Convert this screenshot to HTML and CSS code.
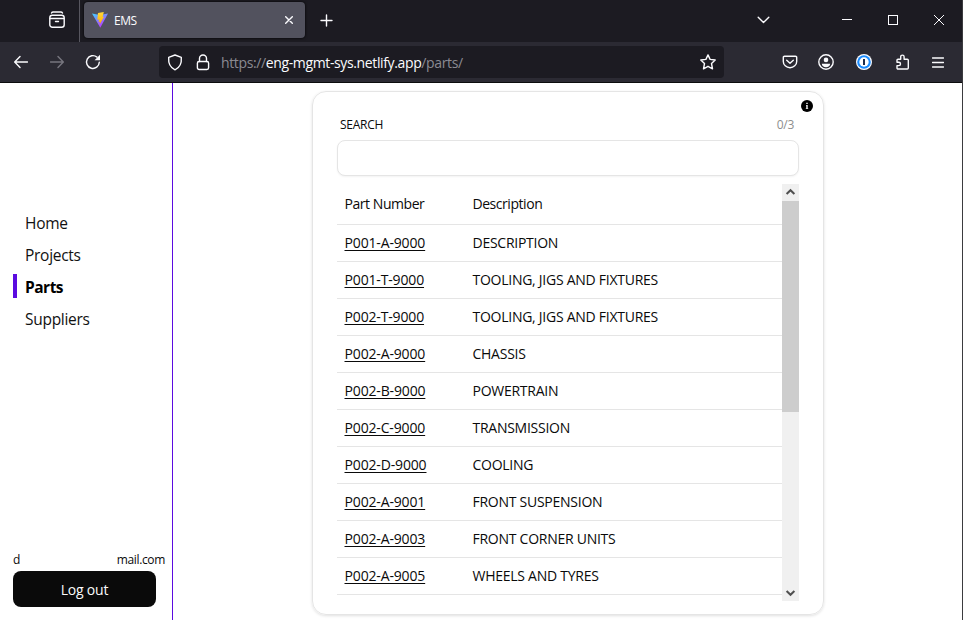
FILE: index.html
```html
<!DOCTYPE html>
<html lang="en">
<head>
<meta charset="utf-8">
<title>EMS</title>
<link rel="stylesheet" href="styles.css">
</head>
<body>
<div class="window">
  <header class="tabbar">
    <svg class="ico recent" width="18" height="18" viewBox="0 0 18 18"><path d="M3.500 2c.4-.8 1-1 1.700-1h7.600c.7 0 1.300.2 1.700 1"/><rect x="1.800" y="4.300" width="14.400" height="11.900" rx="2.500"/><path d="M2 7.500h14M7.500 10.500h3"/></svg>
    <div class="divider"></div>
    <div class="tab">
      <svg class="vite" width="16" height="16" viewBox="0 0 16 16">
        <defs>
          <linearGradient id="a" x1="0" y1="0" x2=".6" y2="1"><stop offset="0" stop-color="#41d1ff"/><stop offset="1" stop-color="#bd34fe"/></linearGradient>
          <linearGradient id="b" x1="0" y1="0" x2="0" y2="1"><stop offset="0" stop-color="#ffd83a"/><stop offset="1" stop-color="#ffa800"/></linearGradient>
        </defs>
        <path fill="url(#a)" d="M0 1.600 8 3l8-1.400L8.300 15.700z"/>
        <path fill="url(#b)" d="M11.800 0 6 .9 5.300 7.800 7.200 7.500 6.600 10 8 9.800 7.600 12.600 12 4.800 10.600 5z"/>
      </svg>
      <span class="tab-title">EMS</span>
      <svg class="ico close" width="8" height="8" viewBox="0 0 8 8"><path d="M.7.7l6.600 6.600M7.300.7L.7 7.300"/></svg>
    </div>
    <svg class="ico plus" width="13" height="13" viewBox="0 0 13 13"><path d="M6.500 1v11M1 6.500h11"/></svg>
    <svg class="ico chevron" width="13" height="8" viewBox="0 0 13 8"><path d="M1.200 1.200l5.300 5.300L11.800 1.200"/></svg>
    <svg class="ico crisp min" width="10" height="10" viewBox="0 0 10 10"><path d="M0 4.500h10"/></svg>
    <svg class="ico crisp max" width="10" height="10" viewBox="0 0 10 10"><rect x=".5" y=".5" width="9" height="9"/></svg>
    <svg class="ico thin shut" width="10" height="10" viewBox="0 0 10 10"><path d="M0 0l10 10M10 0L0 10"/></svg>
  </header>
  <div class="toolbar">
    <svg class="ico back" width="14" height="14" viewBox="0 0 14 14"><path d="M13.500 7H.8M6 1.500.7 7 6 12.500"/></svg>
    <svg class="ico dim fwd" width="14" height="14" viewBox="0 0 14 14"><path d="M.5 7h12.700M8 1.500 13.300 7 8 12.500"/></svg>
    <svg class="ico reload" width="16" height="16" viewBox="0 0 16 16"><path d="M14.300 8.300A6.400 6.400 0 1 1 12 3.100"/><path class="solid" d="M15 .8v5.400H9.600z"/></svg>
    <div class="urlbar">
      <svg class="ico shield" width="16" height="17" viewBox="0 0 16 17"><path d="M8 1 14.300 3.400C14.800 9.500 12.500 13.800 8 15.800 3.500 13.800 1.200 9.500 1.700 3.400z"/></svg>
      <svg class="ico lock" width="14" height="17" viewBox="0 0 14 17"><rect x="1.400" y="7.500" width="11.200" height="8" rx="1.700"/><path d="M3.500 7.500V4.500a3.500 3.500 0 0 1 7 0v3"/></svg>
      <span class="url">https://<b>eng-mgmt-sys.netlify.app</b>/parts/</span>
      <svg class="ico star" width="16" height="16" viewBox="0 0 16 16"><path d="M8 .9 10.100 5.400 15.200 6 11.500 9.500 12.500 14.800 8 12.300 3.500 14.800 4.500 9.500.8 6 5.900 5.400z"/></svg>
    </div>
    <svg class="ico pocket" width="16" height="14" viewBox="0 0 16 14"><path d="M2.500 1.200h11a1.200 1.200 0 0 1 1.200 1.200v4A6.700 6.300 0 0 1 1.300 6.400v-4A1.200 1.200 0 0 1 2.500 1.200zM4.700 5.200 8 8.300l3.300-3.100"/></svg>
    <svg class="ico account" width="16" height="16" viewBox="0 0 16 16"><circle cx="8" cy="8" r="7.200"/><circle class="solid" cx="8" cy="5.900" r="2.300"/><path class="solid" d="M3.800 9.800h8.400c0 2-2 3.500-4.200 3.500S3.800 11.800 3.800 9.800z"/></svg>
    <svg class="onepw" width="16" height="16" viewBox="0 0 16 16"><circle cx="8" cy="8" r="8" fill="#fbfbfe"/><circle cx="8" cy="8" r="6.800" fill="#1a8cff"/><circle cx="8" cy="8" r="4.700" fill="#fff"/><rect x="7" y="5" width="2" height="6" fill="#1b2b4b"/></svg>
    <svg class="ico puzzle" width="15" height="16" viewBox="0 0 15 16"><path d="M2 8V6.200a1 1 0 0 1 1-1h2.700V2.800a1.700 1.700 0 0 1 3.400 0v2.400h3.200a1 1 0 0 1 1 1V14a1 1 0 0 1-1 1H3a1 1 0 0 1-1-1v-2.400h1.800a1.700 1.700 0 0 0 0-3.400H2z"/></svg>
    <svg class="ico menu" width="12" height="11" viewBox="0 0 12 11"><path d="M.5 1h11M.5 5.500h11M.5 10h11"/></svg>
  </div>
  <div class="page">
    <aside class="sidebar">
      <nav class="nav">
        <a>Home</a><a>Projects</a><a class="active">Parts</a><a>Suppliers</a>
      </nav>
      <div class="user"><span>d</span><span>mail.com</span></div>
      <button class="logout">Log out</button>
    </aside>
    <main class="main">
      <section class="card">
        <svg class="info" width="12" height="12" viewBox="0 0 12 12"><circle cx="6" cy="6" r="6" fill="#000"/><path fill="#ddd" d="M5.200 2.800h1.600v1.300H5.200zM5 5h1.800v3.200h.4v.9H4.800v-.9h.4V6H5z"/></svg>
        <div class="label"><label for="q">SEARCH</label><span class="count">0/3</span></div>
        <input class="search" id="q">
        <div class="list">
          <div class="rows">
            <div class="row head"><span>Part Number</span><span>Description</span></div>
            <div class="row"><a>P001-A-9000</a><span>DESCRIPTION</span></div>
            <div class="row"><a>P001-T-9000</a><span>TOOLING, JIGS AND FIXTURES</span></div>
            <div class="row"><a>P002-T-9000</a><span>TOOLING, JIGS AND FIXTURES</span></div>
            <div class="row"><a>P002-A-9000</a><span>CHASSIS</span></div>
            <div class="row"><a>P002-B-9000</a><span>POWERTRAIN</span></div>
            <div class="row"><a>P002-C-9000</a><span>TRANSMISSION</span></div>
            <div class="row"><a>P002-D-9000</a><span>COOLING</span></div>
            <div class="row"><a>P002-A-9001</a><span>FRONT SUSPENSION</span></div>
            <div class="row"><a>P002-A-9003</a><span>FRONT CORNER UNITS</span></div>
            <div class="row"><a>P002-A-9005</a><span>WHEELS AND TYRES</span></div>
          </div>
          <div class="scrollbar">
            <svg width="17" height="17" viewBox="0 0 17 17"><path d="M4.600 10 8.500 6.200l3.900 3.800"/></svg>
            <div class="thumb"></div>
            <svg width="17" height="17" viewBox="0 0 17 17"><path d="M4.600 7l3.900 3.800L12.400 7"/></svg>
          </div>
        </div>
      </section>
    </main>
  </div>
</div>
</body>
</html>
```
FILE: styles.css
```css
* { box-sizing: border-box; }
body { margin: 0; background: #fff; font-family: "Open Sans", "Noto Sans", sans-serif; color: #0a0a0a; }
.window { height: 620px; display: flex; flex-direction: column; border-right: 1px solid #3b3b3f; overflow: hidden; }
svg { display: block; flex: none; }
.ico { fill: none; stroke: #fbfbfe; stroke-width: 1.4; stroke-linecap: round; stroke-linejoin: round; }
.ico .solid { fill: #fbfbfe; stroke: none; }
.dim { stroke: #77767f; }
.crisp { stroke-width: 1; stroke-linecap: butt; shape-rendering: crispEdges; }
.thin { stroke-width: 1; }

.tabbar { height: 42px; flex: none; background: #1c1b22; display: flex; align-items: center; padding-bottom: 2px; }
.recent { margin-left: 48px; }
.divider { width: 1px; height: 42px; margin: 0 4px 0 13px; background: #57565f; align-self: flex-start; }
.tab { width: 221px; height: 36px; border-radius: 4px; background: #52525e; display: flex; align-items: center; padding: 0 12px 0 8px; box-shadow: 0 0 3px #000; }
.tab-title { color: #fbfbfe; font-size: 12px; letter-spacing: -.5px; margin-left: 6px; flex: 1; padding-top: 1px; }
.plus { margin-left: 15px; }
.chevron { margin-left: auto; }
.min { margin-left: 72px; }
.max { margin-left: 36px; }
.shut { margin: 0 18px 0 36px; }

.toolbar { height: 41px; flex: none; background: #2b2a33; border-bottom: 1px solid #0c0c0d; display: flex; align-items: center; padding-left: 14px; }
.fwd { margin-left: 22px; }
.reload { margin-left: 21px; }
.urlbar { width: 565px; height: 32px; margin-left: 58px; border-radius: 4px; background: #1c1b22; display: flex; align-items: center; padding: 0 8px; }
.lock { margin-left: 13px; }
.url { font-size: 14px; letter-spacing: -.37px; color: #8b8a92; margin-left: 11px; flex: 1; white-space: nowrap; padding-top: 1px; }
.url b { font-weight: 400; color: #fbfbfe; }
.pocket { margin-left: 58px; }
.account { margin-left: 20px; }
.onepw { margin-left: 22px; }
.puzzle { margin-left: 23px; }
.menu { margin-left: 22px; }

.page { flex: 1; min-height: 0; display: flex; }
.sidebar { width: 173px; flex: none; border-right: 1px solid #5b0be0; display: flex; flex-direction: column; padding: 0 7px 13px 13px; }
.nav { margin-top: 127px; display: flex; flex-direction: column; gap: 8px; font-size: 15.500px; letter-spacing: -.28px; line-height: 24px; color: #111; }
.nav a { height: 24px; line-height: 26px; padding-left: 8px; border-left: 4px solid transparent; }
.nav .active { border-color: #5b0be0; font-weight: 700; letter-spacing: -.5px; color: #000; }
.user { margin-top: auto; display: flex; justify-content: space-between; font-size: 12px; line-height: 16px; letter-spacing: -.35px; margin-bottom: 3px; }
.logout { width: 143px; height: 36px; border: 0; border-radius: 8px; background: #0a0a0a; color: #fafafa; font: 14px "Open Sans", sans-serif; letter-spacing: -.2px; padding: 0; }

.main { flex: 1; display: flex; justify-content: center; padding-top: 8px; }
.card { position: relative; width: 512px; height: 524px; border: 1px solid #e5e5e5; border-radius: 14px; padding: 24px; box-shadow: 0 1px 3px rgba(0,0,0,.12); margin-left: 1px; }
.info { position: absolute; right: 10px; top: 8px; }
.label { display: flex; justify-content: space-between; height: 24px; line-height: 18px; font-size: 12px; padding: 0 5px 0 3px; letter-spacing: -.25px; }
.count { color: #8e8e8e; }
.search { display: block; width: 462px; height: 36px; border: 1px solid #e5e5e5; border-radius: 8px; background: #fff; box-shadow: 0 1px 2px rgba(0,0,0,.05); }
.list { margin-top: 8px; height: 417px; display: flex; }
.rows { flex: 1; font-size: 14px; letter-spacing: -.26px; }
.row { height: 37px; display: grid; grid-template-columns: 128px 1fr; align-items: center; border-bottom: 1px solid #e5e5e5; padding: 0 0 2px 7.500px; white-space: nowrap; }
.row.head { height: 41px; letter-spacing: -.45px; }
.row a { letter-spacing: -.15px; text-decoration: underline; text-underline-offset: 2px; }
.scrollbar { width: 17px; background: #f0f0f0; display: flex; flex-direction: column; }
.scrollbar svg { fill: none; stroke: #505050; stroke-width: 2; }
.scrollbar svg:last-child { margin-top: auto; }
.thumb { height: 211px; background: #cdcdcd; }
```
